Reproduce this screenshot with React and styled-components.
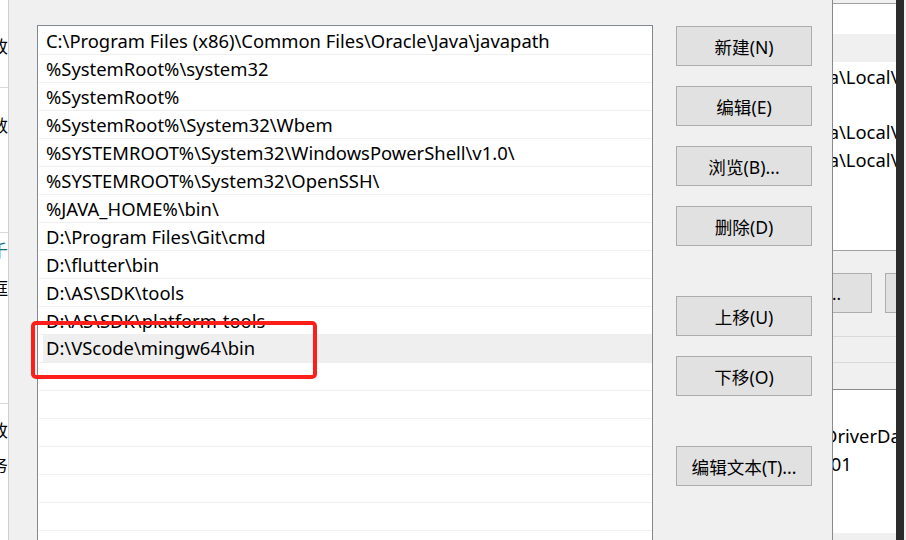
import React from "react";
import styled, { createGlobalStyle } from "styled-components";

const Global = createGlobalStyle`
  html, body { margin: 0; padding: 0; }
  body {
    width: 906px; height: 540px; overflow: hidden; background: #f0f0f0;
    font-family: "Noto Sans", "Noto Sans CJK SC", sans-serif;
  }
`;

const Screen = styled.div`
  display: flex;
  width: 906px;
  height: 540px;
  overflow: hidden;
  position: relative;
`;

const LeftWindow = styled.div`
  width: 8px;
  flex: none;
  background: #fff;
  border-right: 1px solid #cfcfcf;
  display: flex;
  flex-direction: column;
  overflow: hidden;
`;

const LeftBlock = styled.div`
  height: ${(p) => p.$h}px;
  flex: none;
  box-sizing: border-box;
  border-bottom: ${(p) => (p.$line ? "1px solid #d9d9d9" : "none")};
  display: flex;
  flex-direction: column;
  padding-top: ${(p) => p.$pt || 0}px;
  gap: ${(p) => p.$gap || 0}px;
`;

const Frag = styled.span`
  font-family: "Noto Sans CJK SC", sans-serif;
  font-size: 17px;
  line-height: 24px;
  white-space: nowrap;
  margin-left: -9px;
  color: ${(p) => p.$c || "#000"};
`;

const Dialog = styled.div`
  width: 824px;
  flex: none;
  background: #f0f0f0;
  border-right: 1px solid #8a8a8a;
  display: flex;
  align-items: flex-start;
  padding: 25px 0 0 28px;
  box-sizing: border-box;
  gap: 23px;
  height: 540px;
`;

const ListBox = styled.div`
  position: relative;
  width: 616px;
  height: 560px;
  flex: none;
  box-sizing: border-box;
  background: #fff;
  border: 1px solid #828790;
  padding: 1px 0 0 1px;
`;

const Row = styled.div`
  height: 28px;
  box-sizing: border-box;
  border-bottom: 1px solid #efefef;
  display: flex;
`;

const RowInner = styled.div`
  flex: 1;
  margin-left: 4px;
  margin-top: ${(p) => (p.$selected ? "-1px" : "0")};
  margin-bottom: ${(p) => (p.$selected ? "-1px" : "0")};
  padding-left: 3px;
  background: ${(p) => (p.$selected ? "#efefef" : "transparent")};
  font-size: 18.4px;
  line-height: 28px;
  color: #000;
  white-space: nowrap;
`;

const Highlight = styled.div`
  position: absolute;
  left: -7px;
  top: 295px;
  width: 278px;
  height: 50px;
  border: 4px solid #ff1f1a;
  border-radius: 5px;
`;

const ButtonCol = styled.div`
  display: flex;
  flex-direction: column;
  width: 136px;
  padding-top: 1px;
`;

const Button = styled.div`
  height: 40px;
  box-sizing: border-box;
  margin-top: ${(p) => p.$gap}px;
  background: #e1e1e1;
  border: 1px solid #adadad;
  display: flex;
  align-items: center;
  justify-content: center;
  font-family: "Noto Sans", "Noto Sans CJK SC", sans-serif;
  font-size: 17.6px;
  color: #000;
`;

const RightWindow = styled.div`
  width: 63px;
  flex: none;
  display: flex;
  flex-direction: column;
  overflow: hidden;
  background: #f0f0f0;
`;

const RBlock = styled.div`
  height: ${(p) => p.$h}px;
  flex: none;
  box-sizing: border-box;
  background: ${(p) => p.$bg || "#fff"};
  border-top: ${(p) => (p.$top ? `1px solid ${p.$top}` : "none")};
  display: flex;
  flex-direction: column;
  padding-top: ${(p) => p.$pt || 0}px;
  gap: ${(p) => p.$gap || 0}px;
  overflow: hidden;
`;

const RText = styled.span`
  font-size: 18.4px;
  line-height: 28px;
  white-space: nowrap;
  margin-left: ${(p) => p.$ml}px;
  margin-top: ${(p) => p.$mt || 0}px;
  color: #000;
`;

const RButtons = styled.div`
  display: flex;
  gap: 13px;
  margin-left: -41px;
  margin-top: 22px;
`;

const RButton = styled.div`
  width: 80px;
  height: 40px;
  flex: none;
  box-sizing: border-box;
  background: #e1e1e1;
  border: 1px solid #adadad;
  display: flex;
  align-items: center;
  justify-content: flex-end;
  padding-right: 30px;
  font-size: 17px;
`;

const DarkStrip = styled.div`
  width: 8px;
  flex: none;
  background: #2b2b2b;
`;

const paths = [
  "C:\\Program Files (x86)\\Common Files\\Oracle\\Java\\javapath",
  "%SystemRoot%\\system32",
  "%SystemRoot%",
  "%SystemRoot%\\System32\\Wbem",
  "%SYSTEMROOT%\\System32\\WindowsPowerShell\\v1.0\\",
  "%SYSTEMROOT%\\System32\\OpenSSH\\",
  "%JAVA_HOME%\\bin\\",
  "D:\\Program Files\\Git\\cmd",
  "D:\\flutter\\bin",
  "D:\\AS\\SDK\\tools",
  "D:\\AS\\SDK\\platform-tools",
  "D:\\VScode\\mingw64\\bin",
  "", "", "", "", "", "", "",
];

const buttons = [
  ["新建(N)", 0],
  ["编辑(E)", 20],
  ["浏览(B)...", 20],
  ["删除(D)", 20],
  ["上移(U)", 50],
  ["下移(O)", 20],
  ["编辑文本(T)...", 50],
];

export default function App() {
  return (
    <>
      <Global />
      <Screen>
        <LeftWindow>
          <LeftBlock $h={88} $line $pt={34}>
            <Frag>改</Frag>
          </LeftBlock>
          <LeftBlock $h={145} $line $pt={25}>
            <Frag>数</Frag>
          </LeftBlock>
          <LeftBlock $h={171} $line $pt={5} $gap={14}>
            <Frag $c="#1a6f8a">千</Frag>
            <Frag>框</Frag>
          </LeftBlock>
          <LeftBlock $h={136} $pt={14} $gap={11}>
            <Frag>改</Frag>
            <Frag>务</Frag>
          </LeftBlock>
        </LeftWindow>
        <Dialog>
          <ListBox>
            {paths.map((p, i) => (
              <Row key={i}>
                <RowInner $selected={i === 11}>{p}</RowInner>
              </Row>
            ))}
            <Highlight />
          </ListBox>
          <ButtonCol>
            {buttons.map(([t, g]) => (
              <Button key={t} $gap={g}>
                {t}
              </Button>
            ))}
          </ButtonCol>
        </Dialog>
        <RightWindow>
          <RBlock $h={3} $bg="#f0f0f0" />
          <RBlock $h={31} $top="#a0a0a0" />
          <RBlock $h={28} $bg="#f0f0f0" />
          <RBlock $h={188} $pt={1}>
            <RText $ml={-11}>ta\Local\Microsoft</RText>
            <RText $ml={-11} $mt={27}>ta\Local\Temp</RText>
            <RText $ml={-11}>ta\Local\Temp</RText>
          </RBlock>
          <RBlock $h={86} $bg="#f0f0f0" $top="#a0a0a0">
            <RButtons>
              <RButton>...</RButton>
              <RButton />
            </RButtons>
          </RBlock>
          <RBlock $h={26} $bg="#f0f0f0" $top="#d9d9d9" />
          <RBlock $h={27} $bg="#f0f0f0" $top="#d9d9d9" />
          <RBlock $h={144} $top="#8a8a8a" $pt={32}>
            <RText $ml={-9}>DriverData</RText>
            <RText $ml={-9}>\01</RText>
          </RBlock>
          <RBlock $h={20} $bg="#f0f0f0" />
        </RightWindow>
        <DarkStrip />
      </Screen>
    </>
  );
}
